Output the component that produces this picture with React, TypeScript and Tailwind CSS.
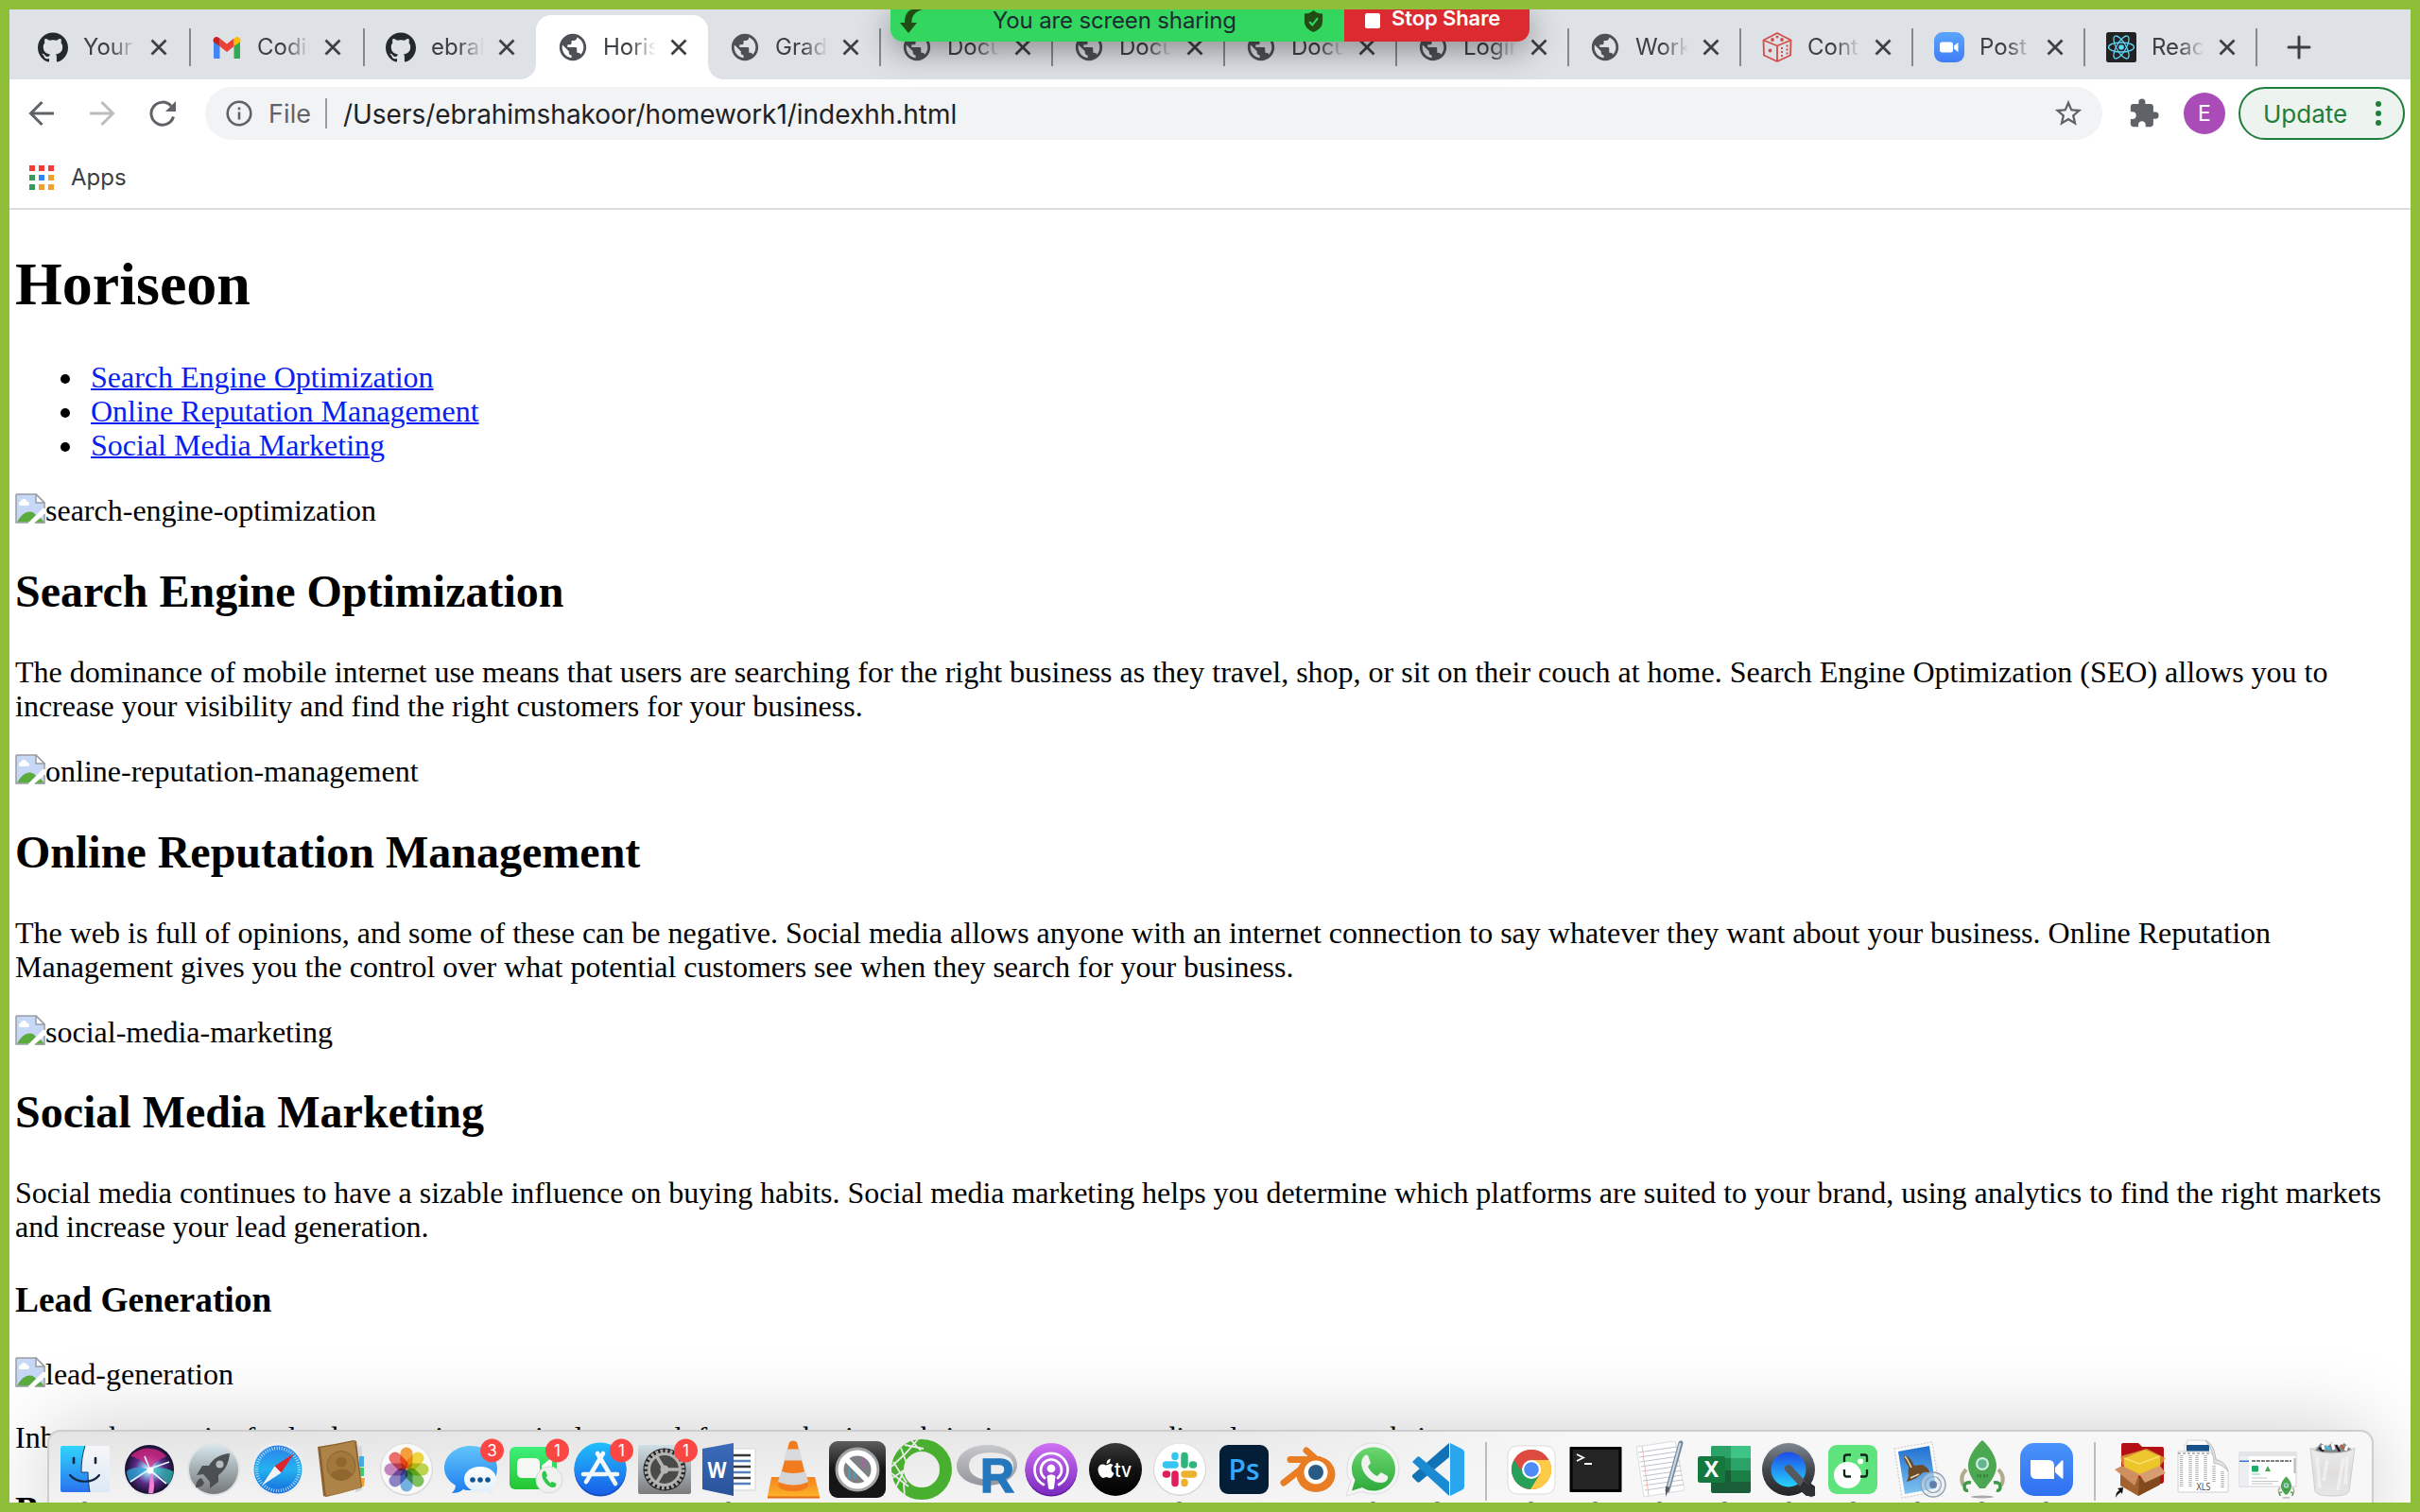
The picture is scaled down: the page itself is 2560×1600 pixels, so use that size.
import React from "react";
import { SiGithub } from "react-icons/si";
import { MdPublic, MdExtension, MdStarBorder } from "react-icons/md";

/* ---------- tab icons ---------- */

const Github = () => <SiGithub className="size-8 text-[#24292e]" />;

const Globe = () => <MdPublic className="size-[34px] shrink-0 -mx-px text-[#4d5156]" />;

const Gmail = () => (
  <svg viewBox="0 0 32 32" className="size-8">
    <path d="M2 27.5V8l6.5 5v15H4a2 2 0 0 1-2-.5z" fill="#4285f4" />
    <path d="M30 27.5V8l-6.5 5v15H28a2 2 0 0 0 2-.5z" fill="#34a853" />
    <path d="M8.500 6.500 16 12.500l7.500-6v8.500L16 21l-7.500-6z" fill="#ea4335" />
    <path d="M1.500 9c0-3.500 3.500-5 6-3l1 .6V15L1.500 10z" fill="#c5221f" />
    <path d="M30.500 9c0-3.500-3.500-5-6-3l-1 .6V15l7-5z" fill="#fbbc04" />
  </svg>
);

const Dice = () => (
  <svg viewBox="0 0 32 32" className="size-8" fill="none" stroke="#d14f48" strokeWidth="1.8" strokeLinejoin="round">
    <path d="M16 1 30.500 8.500 30 24.500 16 31 2 24.500 1.500 8.500z" />
    <path d="M1.500 8.500 16 14.500 30.500 8.500M16 14.500V31" />
    <g fill="#d14f48" stroke="none">
      <circle cx="16" cy="5" r="1.500" />
      <circle cx="11" cy="8" r="1.900" />
      <circle cx="21" cy="8" r="1.900" />
      <circle cx="8.500" cy="19.500" r="1.900" />
      <path d="M20 16h2v2h-2zM20 20h2v2h-2zM20 24h2v2h-2zM25.500 13.500h2v2h-2zM25.500 17.500h2v2h-2zM25.500 21.500h2v2h-2z" />
    </g>
  </svg>
);

const ZoomTab = () => (
  <svg viewBox="0 0 32 32" className="size-8">
    <defs>
      <linearGradient id="zt" x1="0" y1="0" x2="0" y2="1">
        <stop offset="0" stopColor="#5aa5fb" />
        <stop offset="1" stopColor="#3f7df6" />
      </linearGradient>
    </defs>
    <rect width="32" height="32" rx="9" fill="url(#zt)" />
    <rect x="6" y="10.500" width="14" height="11" rx="2.500" fill="#fff" />
    <path d="M21 14.500 25.500 11v10L21 17.500z" fill="#fff" />
  </svg>
);

const ReactTab = () => (
  <svg viewBox="0 0 32 32" className="size-8">
    <rect width="32" height="32" rx="2.500" fill="#222" />
    <g fill="none" stroke="#5fd6f5" strokeWidth="1.300">
      <ellipse cx="16" cy="16" rx="13.500" ry="5" />
      <ellipse cx="16" cy="16" rx="13.500" ry="5" transform="rotate(60 16 16)" />
      <ellipse cx="16" cy="16" rx="13.500" ry="5" transform="rotate(120 16 16)" />
    </g>
    <circle cx="16" cy="16" r="2.800" fill="#5fd6f5" />
  </svg>
);

const Cross = () => (
  <svg viewBox="0 0 18 18" className="size-[18px] shrink-0" stroke="#3c4043" strokeWidth="2.800">
    <path d="M1.500 1.500l15 15M16.500 1.500l-15 15" />
  </svg>
);

type TabProps = { icon: React.ReactNode; label: string; active?: boolean; size?: string; sep?: boolean };

const Tab = ({ icon, label, active, size = "w-[182px] pl-[23px]", sep = true }: TabProps) => (
  <div
    className={
      "relative flex shrink-0 items-center " +
      (active ? "mt-1.5 h-[68px] rounded-t-2xl bg-white pb-0 " : "h-[74px] pt-1.5 ") +
      size
    }
  >
    {active && (
      <>
        <span className="absolute bottom-0 -left-4 size-4 bg-[radial-gradient(circle_at_0_0,transparent_15.5px,white_16px)]" />
        <span className="absolute bottom-0 -right-4 size-4 bg-[radial-gradient(circle_at_100%_0,transparent_15.5px,white_16px)]" />
      </>
    )}
    <span className="flex size-8 shrink-0 items-center justify-center">{icon}</span>
    <span className="ml-4 w-[57px] shrink-0 overflow-hidden whitespace-nowrap text-[24px] leading-8 text-[#3c4043] [mask-image:linear-gradient(to_right,black_50%,transparent_98%)]">
      {label}
    </span>
    <span className="ml-3.5 flex">
      <Cross />
    </span>
    {sep && <span className="ml-auto -mr-px h-10 w-0.5 bg-[#85888d]" />}
  </div>
);

const TabStrip = () => (
  <div className="flex h-[74px] bg-[#dee1e6]">
    <Tab icon={<Github />} label="Your repos" size="w-[191px] pl-[30px]" />
    <Tab icon={<Gmail />} label="Coding" size="w-[184px] pl-[23px]" />
    <Tab icon={<Github />} label="ebrahim" size="w-[182px] pl-[23px]" sep={false} />
    <Tab icon={<Globe />} label="Horiseon" active sep={false} />
    <Tab icon={<Globe />} label="Gradebook" />
    <Tab icon={<Globe />} label="Document" />
    <Tab icon={<Globe />} label="Document" />
    <Tab icon={<Globe />} label="Document" />
    <Tab icon={<Globe />} label="Login" />
    <Tab icon={<Globe />} label="Work" />
    <Tab icon={<Dice />} label="Cont" />
    <Tab icon={<ZoomTab />} label="Post" />
    <Tab icon={<ReactTab />} label="React" />
    <svg viewBox="0 0 26 26" className="mt-[27px] ml-[32px] size-[26px]" stroke="#3c4043" strokeWidth="3" strokeLinecap="round">
      <path d="M13 2v22M2 13h22" />
    </svg>
  </div>
);

/* ---------- toolbar ---------- */

const Toolbar = () => (
  <div className="flex h-[72px] items-center pl-5 pr-1">
    <svg viewBox="0 0 28 28" className="size-7 shrink-0 fill-none stroke-[#5f6368] stroke-[3]">
      <path d="M27 14H3M14.500 2 2.500 14l12 12" />
    </svg>
    <svg viewBox="0 0 28 28" className="ml-9 size-7 shrink-0 fill-none stroke-[#babcbe] stroke-[3]">
      <path d="M1 14h24M13.500 2l12 12-12 12" />
    </svg>
    <svg viewBox="0 0 28 28" className="ml-9 size-7 shrink-0 fill-none stroke-[#5f6368] stroke-[3]">
      <path d="M25.500 17.500A12 12 0 1 1 23 6.200" />
      <path d="M28 1v11H17z" className="fill-[#5f6368] stroke-none" />
    </svg>
    <div className="ml-[31px] flex h-14 w-[2007px] shrink-0 items-center rounded-full bg-[#f1f3f4] pl-[22px] pr-[19px]">
      <svg viewBox="0 0 28 28" className="size-7 fill-none stroke-[#5f6368] stroke-[2.600]">
        <circle cx="14" cy="14" r="12.300" />
        <path d="M14 12.500v8M14 7.500v2.800" />
      </svg>
      <span className="ml-[17px] w-[47px] pt-px text-[27px] leading-9 tracking-[0.1px] text-[#5f6368]">File</span>
      <span className="ml-[13px] h-8 w-0.5 bg-[#9a9da1]" />
      <span className="ml-[17px] pt-px text-[28px] leading-9 tracking-[-0.03px] text-[#202124]">/Users/ebrahimshakoor/homework1/indexhh.html</span>
      <MdStarBorder className="ml-auto size-[34px] text-[#5f6368]" />
    </div>
    <MdExtension className="ml-[27px] size-[34px] shrink-0 text-[#5f6368]" />
    <span className="ml-[25px] flex size-11 shrink-0 items-center justify-center rounded-full bg-[#a94cb8] pt-px text-[23px] text-white">E</span>
    <div className="ml-[14px] flex h-14 w-44 shrink-0 items-center rounded-full border-2 border-[#1e7e3a] bg-[#edf3ee] pl-6">
      <span className="pt-px text-[26px] leading-9 text-[#1e7e3a]">Update</span>
      <span className="ml-auto mr-[23px] flex flex-col gap-[4px]">
        <i className="size-[6px] rounded-full bg-[#1e7e3a]" />
        <i className="size-[6px] rounded-full bg-[#1e7e3a]" />
        <i className="size-[6px] rounded-full bg-[#1e7e3a]" />
      </span>
    </div>
  </div>
);

const appColors = [
  "bg-[#f43a35]", "bg-[#f43a35]", "bg-[#f43a35]",
  "bg-[#37995b]", "bg-[#2b86f0]", "bg-[#eea22c]",
  "bg-[#37995b]", "bg-[#eea22c]", "bg-[#eea22c]",
];

const Bookmarks = () => (
  <div className="flex h-[66px] items-center border-b-2 border-[#dadce0] pb-1 pl-[21px]">
    <div className="mt-1 grid grid-cols-3 gap-1">
      {appColors.map((c, i) => (
        <span key={i} className={"size-1.5 " + c} />
      ))}
    </div>
    <span className="ml-[18px] mt-1 text-[24px] leading-8 text-[#3c4043]">Apps</span>
  </div>
);

/* ---------- screen sharing bar ---------- */

const ShareBar = () => (
  <div className="absolute top-0 left-[932px] flex h-[34px] w-[676px] rounded-b-[13px] shadow-[0_8px_34px_rgba(0,0,0,0.42)]">
    <div className="flex w-[480px] rounded-bl-[13px] bg-[#33d75f]">
      <svg viewBox="0 0 26 26" className="ml-[9px] size-[26px] fill-[#1f4d14]">
        <path d="M25 0C17 2 13 7 13.500 14H19L10 25 1 14h5C6 6 9 1 14 0z" />
      </svg>
      <span className="ml-[73px] w-[258px] whitespace-nowrap text-[24px] leading-[24px] tracking-[-0.15px] text-[#1d2b33]">You are screen sharing</span>
      <svg viewBox="0 0 22 24" className="ml-[70px] mt-px size-[23px]">
        <path d="M11 0c3 2.600 6 3.600 10 3.600V12c0 6-4 9.500-10 12C5 21.500 1 18 1 12V3.600c4 0 7-1 10-3.600z" fill="#1f4d14" />
        <path d="M6.500 12.500l3.200 3.500 6-7.500" fill="none" stroke="#33d75f" strokeWidth="2.200" />
      </svg>
    </div>
    <div className="flex w-[196px] rounded-br-[13px] bg-[#dc2b30]">
      <span className="mt-1 ml-[22px] size-4 rounded-[2px] bg-white" />
      <span className="ml-3 whitespace-nowrap text-[22px] leading-[18px] font-semibold tracking-[-0.1px] text-white">Stop Share</span>
    </div>
  </div>
);

/* ---------- page ---------- */

const BrokenImage = ({ alt }: { alt: string }) => (
  <div className="flex h-[37px] items-start">
    <svg viewBox="0 0 32 32" className="mt-px size-8 shrink-0">
      <path d="M1 1h21l9 9v21H1z" fill="#c6d8f6" />
      <path d="M4 12c-.500-3 2-3.500 2.500-4.500C8 5 12 5.500 12.500 8.500c3 .5 3 3.500 1.500 4.500H5z" fill="#fff" />
      <path d="M2 30.500C6 23 11 19 16 19.500c4 .500 7 3 10 11z" fill="#5bab3f" />
      <path d="M31.500 14 13 32h7L32 21z" fill="#fff" />
      <path d="M20.500 31.500 27 26l4.500 5.500z" fill="#5bab3f" />
      <path d="M1 1h21l9 9v6M31 22v9h-10M14 31H1V1" fill="none" stroke="#9a9da3" strokeWidth="1.500" />
      <path d="M22 1v9h9z" fill="#fff" stroke="#9a9da3" strokeWidth="1.500" />
    </svg>
    <span className="pt-px leading-9">{alt}</span>
  </div>
);

const H2 = ({ children }: { children: React.ReactNode }) => (
  <h2 className="my-10 text-[48px] leading-[55px] font-bold">{children}</h2>
);

const Page = () => (
  <main className="h-[1368px] overflow-hidden pl-1.5 pr-4 font-['Liberation_Serif',serif] text-[32px] leading-9 text-black">
    <h1 className="mt-[43px] mb-[45px] text-[64px] leading-[71px] font-bold">Horiseon</h1>
    <ul className="mb-8 pl-20 [&_a]:text-[#0a1ef0] [&_a]:underline [&_a]:decoration-2 [&_li]:before:mr-[22px] [&_li]:before:-ml-8 [&_li]:before:inline-block [&_li]:before:size-2.5 [&_li]:before:rounded-full [&_li]:before:bg-black [&_li]:before:align-[4px] [&_li]:before:content-['']">
      <li><a>Search Engine Optimization</a></li>
      <li><a>Online Reputation Management</a></li>
      <li><a>Social Media Marketing</a></li>
    </ul>
    <BrokenImage alt="search-engine-optimization" />
    <H2>Search Engine Optimization</H2>
    <p className="mb-8">
      The dominance of mobile internet use means that users are searching for the right business as they travel, shop, or sit on their couch at home. Search Engine Optimization (SEO) allows you to
      <br />
      increase your visibility and find the right customers for your business.
    </p>
    <BrokenImage alt="online-reputation-management" />
    <H2>Online Reputation Management</H2>
    <p className="mb-8">
      The web is full of opinions, and some of these can be negative. Social media allows anyone with an internet connection to say whatever they want about your business. Online Reputation
      <br />
      Management gives you the control over what potential customers see when they search for your business.
    </p>
    <BrokenImage alt="social-media-marketing" />
    <div className="-mt-px">
      <H2>Social Media Marketing</H2>
    </div>
    <p className="[word-spacing:-0.1px]">
      Social media continues to have a sizable influence on buying habits. Social media marketing helps you determine which platforms are suited to your brand, using analytics to find the right markets
      <br />
      and increase your lead generation.
    </p>
    <h3 className="mt-[38px] mb-[38px] text-[37.44px] leading-[43px] font-bold">Lead Generation</h3>
    <BrokenImage alt="lead-generation" />
    <p className="mt-[31px]">Inbound strategies for lead generation require less work for your business, bringing customers directly to your website.</p>
    <h3 className="mt-[37px] text-[37.44px] leading-[43px] font-bold">Brand Awareness</h3>
  </main>
);

/* ---------- dock icons, each on a 64 by 64 grid ---------- */

const Grad = ({ id, a, b, m }: { id: string; a: string; b: string; m?: string }) => (
  <linearGradient id={id} x1="0" y1="0" x2="0" y2="1">
    <stop offset="0" stopColor={a} />
    {m && <stop offset="0.5" stopColor={m} />}
    <stop offset="1" stopColor={b} />
  </linearGradient>
);

const Finder = () => (
  <>
    <Grad id="fi" a="#2fd5fb" b="#2a72ee" />
    <Grad id="fj" a="#f7f7f9" b="#dce9f6" />
    <rect x="6" y="7" width="52" height="49" rx="2" fill="url(#fj)" />
    <path d="M8 7h24c-3 9-4 18-4 28h7c0 8 1 15 2 21H8a2 2 0 0 1-2-2V9a2 2 0 0 1 2-2z" fill="url(#fi)" />
    <path d="M32 7c-3 9-4 18-4 28h7c0 8 1 15 2 21" fill="none" stroke="#1b3c68" strokeWidth="1" />
    <path d="M20 20v5M43 20v5" stroke="#12263f" strokeWidth="2.600" strokeLinecap="round" />
    <path d="M16 38c8 9 24 9 31 0" fill="none" stroke="#12263f" strokeWidth="2.200" strokeLinecap="round" />
  </>
);

const Siri = () => (
  <>
    <radialGradient id="si">
      <stop offset="0" stopColor="#fff" /><stop offset=".25" stopColor="#8fb9e8" /><stop offset=".6" stopColor="#5a2a86" /><stop offset="1" stopColor="#150f2c" />
    </radialGradient>
    <circle cx="32" cy="32" r="28" fill="#e9e9ee" />
    <circle cx="32" cy="32" r="26" fill="url(#si)" />
    <path d="M12 18C22 6 42 8 50 18 42 22 36 24 33 33 28 24 20 20 12 18z" fill="#d8257f" opacity=".75" />
    <path d="M8 34c8-6 16-5 25-1-8 2-15 8-21 13-2-3-4-8-4-12z" fill="#2ba8d8" opacity=".75" />
    <path d="M33 33c9-5 18-2 24 1 0 6-2 10-5 14-5-6-11-12-19-15z" fill="#2bc7b8" opacity=".7" />
    <path d="M33 33c4 8 5 16 3 24l-5 .500C32 48 33 40 33 33z" fill="#f27fd0" />
    <path d="M12 45 33 31l20-7M33 33 27 18M33 33l17 14" stroke="#d9fbff" strokeWidth="1.700" fill="none" />
    <circle cx="33" cy="33" r="3.500" fill="#fff" />
  </>
);

const Launchpad = () => (
  <>
    <Grad id="la" a="#d6e6ec" b="#757778" m="#a3adb1" />
    <circle cx="32" cy="32" r="28" fill="#dfe2e4" />
    <circle cx="32" cy="32" r="26" fill="url(#la)" />
    <path d="M49 15c-11 1-18 6-22 13h-7l-6 10 7-1 7 8 0 7 9-7v-7c7-5 11-12 12-23z" fill="#4c4f52" />
    <circle cx="38.500" cy="26.500" r="4" fill="#b3bcc0" />
    <path d="M19 41c-4 1-6 6-6 10 4 0 8-1 9-5z" fill="#4c4f52" />
  </>
);

const Safari = () => (
  <>
    <Grad id="sa" a="#2c7fe8" b="#1568dc" m="#24b2f0" />
    <circle cx="32" cy="32" r="28" fill="#eceef1" />
    <circle cx="32" cy="32" r="25.500" fill="url(#sa)" />
    <circle cx="32" cy="32" r="22.500" fill="none" stroke="#bfe4fb" strokeWidth="3.500" strokeDasharray="0.9 1.7" />
    <path d="M49 15 28.500 28.500 35.500 35.500z" fill="#e0242b" />
    <path d="M15 49 28.500 28.500 35.500 35.500z" fill="#f1f3f5" />
  </>
);

const Contacts = () => (
  <>
    <path d="M46 6l7 2v46l-7 2z" fill="#d7d7d7" />
    <path d="M50 18h5v11h-5z" fill="#48a8e0" /><path d="M50 30h5v9h-5z" fill="#43c86b" /><path d="M50 41h6l-1 9h-5z" fill="#f2a02e" />
    <path d="M6 8Q26 5 44 1l3 1 6 49q-20 6-38 10l-3-1z" fill="#8b6231" />
    <path d="M9 9Q28 6 45 2l7 49Q32 57 15 60z" fill="#ad8347" />
    <ellipse cx="31" cy="28" rx="15" ry="15.500" fill="#a3783c" stroke="#8b652f" />
    <circle cx="31" cy="24" r="5.500" fill="#8f682f" />
    <path d="M20 38c3-8 18-9 22-1-5 8-17 8-22 1z" fill="#8f682f" />
  </>
);

const petals = ["#f7941e", "#f1d421", "#b5d334", "#6cbb45", "#61a8dd", "#7c72c0", "#c077b7", "#ef5a55"];
const Photos = () => (
  <>
    <circle cx="32" cy="32" r="28" fill="#d7d9dc" />
    <circle cx="32" cy="31.500" r="26.800" fill="#f9f9fa" />
    {petals.map((c, i) => (
      <rect key={c} x="25.500" y="8.500" width="13" height="23" rx="6.500" fill={c} opacity=".86" transform={`rotate(${i * 45} 32 32)`} className="mix-blend-multiply" />
    ))}
  </>
);

const Badge = ({ n }: { n: string }) => (
  <>
    <circle cx="54.500" cy="12" r="12.500" fill="#fb4743" />
    <text x="54.500" y="18" textAnchor="middle" fontSize="17" fill="#fff" fontFamily="Inter, sans-serif">{n}</text>
  </>
);

const Messages = () => (
  <>
    <Grad id="me" a="#62c4fb" b="#1d7df0" />
    <Grad id="mf" a="#fff" b="#dfeefb" />
    <path d="M32 7c16 0 28 10 28 24S48 54 32 54c-3 0-6 0-8-1-3 3-8 4-12 4 2-2 4-5 4-8C9 45 4 38 4 31 4 17 16 7 32 7z" fill="url(#me)" />
    <path d="M42 29c10 0 17 6 17 13 0 4-2 8-5 10 0 2 1 4 2 6-3 0-6-1-8-3l-6 .700c-10 0-17-6-17-13.500S32 29 42 29z" fill="url(#mf)" />
    <circle cx="34" cy="43" r="2.800" fill="#14548f" /><circle cx="42" cy="43" r="2.800" fill="#14548f" /><circle cx="50" cy="43" r="2.800" fill="#14548f" />
    <Badge n="3" />
  </>
);

const FaceTime = () => (
  <>
    <Grad id="fa" a="#3df07a" b="#25c532" />
    <rect x="4" y="8" width="50" height="45" rx="6" fill="url(#fa)" />
    <rect x="12" y="20" width="24" height="21" rx="5" fill="#f4f7f4" />
    <path d="M38 28l11-9v14l-11 4z" fill="#f4f7f4" />
    <circle cx="46" cy="43" r="14" fill="#eef1ee" stroke="#d5dad5" />
    <path d="M39 35c-3 5 5 17 12 16 3-1 3-4 1-5l-3-1-2 1.500-4.500-6 1.500-2-1.500-4c-1-1.500-2.500-1-3.500.500z" fill="#2cc94a" />
    <Badge n="1" />
  </>
);

const AppStore = () => (
  <>
    <Grad id="as" a="#20bffb" b="#1a5ee8" />
    <circle cx="32" cy="33" r="27.500" fill="#1550c4" />
    <circle cx="32" cy="31" r="27.500" fill="url(#as)" />
    <g stroke="#f3f8fd" strokeWidth="4.600" strokeLinecap="round">
      <path d="M35 15 20 40M29 15l19 32M14 37h24M45 37h5M17 45l2-3" />
    </g>
    <Badge n="1" />
  </>
);

const Prefs = () => (
  <>
    <Grad id="pr" a="#cfdfe6" b="#7b7c7c" />
    <rect x="4" y="6" width="56" height="52" rx="2" fill="url(#pr)" />
    <circle cx="32" cy="32" r="22.500" fill="#202122" />
    <circle cx="32" cy="32" r="19.500" fill="none" stroke="#a8a8a6" strokeWidth="4" strokeDasharray="3 2.100" />
    <circle cx="32" cy="32" r="16.500" fill="#4a4a49" stroke="#b5b4b1" strokeWidth="3" />
    <path d="M32 32h17M32 32 23 17M32 32 23 47" stroke="#b5b4b1" strokeWidth="3.500" />
    <circle cx="32" cy="32" r="4.500" fill="#b5b4b1" />
    <Badge n="1" />
  </>
);

const Word = () => (
  <>
    <Grad id="wo" a="#3a6cba" b="#2a5298" />
    <rect x="30" y="10" width="30" height="44" rx="1" fill="#fff" stroke="#d0d3d8" />
    <path d="M36 17h19M36 29h19M36 41h19" stroke="#37373a" strokeWidth="2.400" />
    <path d="M36 23h19M36 35h19M36 47h19" stroke="#5580bd" strokeWidth="2.400" />
    <path d="M4 10 37 4v56L4 53z" fill="url(#wo)" />
    <text x="19.500" y="41" textAnchor="middle" fontSize="24" fontWeight="700" fill="#fff" fontFamily="Open Sans, sans-serif" textLength="20" lengthAdjust="spacingAndGlyphs">W</text>
  </>
);

const Vlc = () => (
  <>
    <Grad id="vl" a="#f58220" b="#fdb62b" />
    <path d="M9 40h46l5 20v2H5v-2z" fill="url(#vl)" />
    <path d="M5 60.500h55v2H5z" fill="#e46a12" />
    <path d="M28 3q4-3 8 0l12 46c-3 8-29 8-32 0z" fill="#f27b1d" />
    <path d="M25.500 10.500h13.200l3.200 12H22.200z" fill="#d9dadb" />
    <path d="M19.500 34q12.500 4 25.500 0l3 11q-15 7-32 0z" fill="#d3d5d7" />
  </>
);

const Blocked = () => (
  <>
    <Grad id="bl" a="#5e5e5e" b="#161616" m="#151515" />
    <rect x="2" y="2" width="60" height="60" rx="9" fill="url(#bl)" />
    <circle cx="32" cy="32" r="23.500" fill="#a2a3a5" />
    <circle cx="32" cy="32" r="17.500" fill="#7c8084" stroke="#fff" strokeWidth="6" />
    <path d="M22 30h3v12h-3zM28 34h3v8h-3z" fill="#4a9bb5" /><path d="M36 20h4v10h-4z" fill="#9d6a9c" />
    <path d="M19 20l26 26" stroke="#fff" strokeWidth="6" />
  </>
);

const Anaconda = () => (
  <>
    <circle cx="32" cy="32" r="25.500" fill="none" stroke="#49b02f" strokeWidth="13" />
    <g stroke="#eaeaea" strokeWidth="1.800" fill="none">
      <path d="M0 29l15-14 13-15M1 41l15-10M2 24l14 22M10 9l7 19M14 6l20 4M5 50l10-20M0 36l18 14M20 0l11 12M13 46l1 16" />
    </g>
  </>
);

const RLang = () => (
  <>
    <Grad id="rg" a="#c7c8cb" b="#93969c" />
    <path fillRule="evenodd" d="M32 6c17 0 32 8 32 21S49 49 32 49 0 41 0 28 15 6 32 6zm4 8C22 14 13 19 13 28s9 15 23 15 24-6 24-15-10-14-24-14z" fill="url(#rg)" />
    <text x="25" y="56" fontSize="50" fontWeight="700" fill="#2577bd" stroke="#2577bd" strokeWidth="1.500" fontFamily="Liberation Sans, sans-serif" textLength="36" lengthAdjust="spacingAndGlyphs">R</text>
  </>
);

const Podcasts = () => (
  <>
    <Grad id="po" a="#d071f4" b="#7a2abf" />
    <circle cx="32" cy="33" r="27.500" fill="#5d189c" />
    <circle cx="32" cy="31.500" r="27.500" fill="url(#po)" />
    <g fill="none" stroke="#fff" strokeWidth="2.700" strokeLinecap="round">
      <path d="M24 48a17.500 17.500 0 1 1 16 0" />
      <path d="M25 41a11 11 0 1 1 14 0" />
    </g>
    <circle cx="32" cy="31" r="4.300" fill="#fff" />
    <path d="M27.500 39q4.500-3.500 9 0L35 52q-3 2.500-6 0z" fill="#fff" />
  </>
);

const AppleTv = () => (
  <>
    <Grad id="at" a="#383838" b="#000" m="#121212" />
    <circle cx="32" cy="32" r="28" fill="url(#at)" />
    <path d="M24 27c2-1.500 4-1 5.500.500-3 2.300-2.500 7 1 8.500-1 3-3 5-4.500 5-1.500 0-2-1-3.500-1s-2 1-3.500 1c-3 0-8-9-4-13 2-2 4.500-2 6.500-.500z M22.500 26c0-3 2-5 4-5.500.500 3-1.500 5.500-4 5.500z" fill="#fff" />
    <text x="31" y="40" fontSize="22" fontWeight="500" fill="#fff" fontFamily="Inter, sans-serif" textLength="18" lengthAdjust="spacingAndGlyphs">tv</text>
  </>
);

const Slack = () => (
  <>
    <circle cx="32" cy="32" r="28" fill="#d6d6d9" />
    <circle cx="32" cy="31.500" r="27" fill="#fff" />
    <g strokeWidth="7.500" strokeLinecap="round">
      <path d="M17.500 27H27M27 17.500v1" stroke="#36c5f0" />
      <path d="M37 17.500V27M46.500 27h-1" stroke="#2eb67d" />
      <path d="M46.500 37H37M37 46.500v-1" stroke="#ecb22e" />
      <path d="M27 46.500V37M17.500 37h1" stroke="#e01e5a" />
    </g>
  </>
);

const Photoshop = () => (
  <>
    <rect x="6" y="6" width="52" height="52" rx="9" fill="#031e36" />
    <text x="32" y="42.500" textAnchor="middle" fontSize="31" fontWeight="600" fill="#35a8ff" fontFamily="Open Sans, sans-serif" textLength="33" lengthAdjust="spacingAndGlyphs">Ps</text>
  </>
);

const Blender = () => (
  <>
    <g fill="none" stroke="#e97d23" strokeWidth="7" strokeLinecap="round" strokeLinejoin="round">
      <path d="M13 21.500h30M30 12l17 15M6 46 34 24" />
    </g>
    <ellipse cx="40" cy="37" rx="20.500" ry="19" fill="#e97d23" />
    <circle cx="40" cy="35" r="12.500" fill="#fff" />
    <circle cx="40" cy="35" r="8" fill="#285a86" />
  </>
);

const WhatsApp = () => (
  <>
    <Grad id="wa" a="#6bd66f" b="#2dab3b" />
    <path d="M33 4c16 0 27 12 27 27S49 58 33 58c-4 0-8-1-12-3L4 60l5-16C5 40 5 36 5 31 5 16 17 4 33 4z" fill="#f4f5f5" stroke="#dcdddd" />
    <path d="M33 8.500c13 0 23 10 23 23s-10 23-23 23c-4.500 0-8.500-1-12-3.500L10 54.500 13.500 43C11 39.500 10 35.500 10 31.500c0-13 10-23 23-23z" fill="url(#wa)" />
    <path d="M23 18c-8 8 2 28 18 28 5 0 8-3 7-7l-7-4-4 4c-5-2-8-6-10-10l3-4-3-8c-1-1-3-.500-4 1z" fill="#f1f3f1" />
  </>
);

const VsCode = () => (
  <>
    <path d="M5 40l5 5c1 1 2 1 3 0l31-26V4L5 38z" fill="#1173b6" />
    <path d="M5 24l5-5c1-1 2-1 3 0l31 26v15z" fill="#1a8bd3" />
    <path d="M45 4l12 6c2 1 3 2 3 4v36c0 2-1 3-3 4l-12 6z" fill="#2aa6ee" />
  </>
);

const Chrome = () => (
  <>
    <rect x="7" y="7" width="50" height="51" rx="10" fill="#fff" stroke="#dcdcdc" />
    <circle cx="32" cy="32" r="21" fill="#e8453c" />
    <path d="M32 32 13.800 21.500A21 21 0 0 0 32 53l8-15z" fill="#27a05a" />
    <path d="M32 22h18.500A21 21 0 0 1 31 53l10-16z" fill="#fdcb45" />
    <path d="M13.800 21.500A21 21 0 0 1 50.500 22H32L20 32z" fill="#dd4a3f" />
    <circle cx="32" cy="32" r="10" fill="#fff" />
    <circle cx="32" cy="32" r="7.800" fill="#4d8bf5" />
  </>
);

const Terminal = () => (
  <>
    <rect x="4.500" y="8" width="55" height="48" rx="1" fill="#000" />
    <rect x="7.500" y="11" width="49" height="42" fill="#242424" />
    <path d="M12 16l7 3.500-7 3.500M20 26h8" fill="none" stroke="#fff" strokeWidth="1.800" />
  </>
);

const TextEdit = () => (
  <>
    <path d="M7 8 48 2l10 52-43 7z" fill="#fff" stroke="#dcdcdc" />
    <g stroke="#bcc3cd" strokeWidth="1">
      <path d="M9 14l41-6M10 19l41-6M11 24l41-6M12 29l41-6M13 34l41-6M14 39l41-6M14 44l41-6M15 49l41-6M16 54l41-6" />
    </g>
    <path d="M13 7l7 53" stroke="#efb9b9" />
    <path d="M54 4 40 54" stroke="#7f8b97" strokeWidth="5" strokeLinecap="round" />
    <path d="M53.500 4 41 50" stroke="#c6dcee" strokeWidth="2" />
    <path d="M38 50l4 1-4 10z" fill="#54575c" />
  </>
);

const Excel = () => (
  <>
    <rect x="18" y="7" width="42" height="50" rx="2" fill="#1a7f44" />
    <path d="M20 7h19v13H18V9z" fill="#2ba267" /><path d="M39 7h19l2 2v11H39z" fill="#3dc588" />
    <path d="M39 20h21v13H39z" fill="#2ba267" /><path d="M18 33h21v12H18z" fill="#185c37" /><path d="M18 45h42v10l-2 2H20l-2-2z" fill="#1b5e3a" />
    <rect x="4" y="18" width="29" height="28" rx="2.500" fill="#15783f" />
    <text x="18.500" y="40" textAnchor="middle" fontSize="23" fontWeight="700" fill="#fff" fontFamily="Open Sans, sans-serif">X</text>
  </>
);

const QuickTime = () => (
  <>
    <Grad id="qa" a="#7e8791" b="#222325" m="#45494e" />
    <Grad id="qb" a="#1e4be8" b="#27d3fc" />
    <path d="M44 38l16 12v10h-9L34 46z" fill="#2b2c2f" />
    <circle cx="32" cy="32" r="28" fill="url(#qa)" />
    <circle cx="32" cy="32" r="18.500" fill="url(#qb)" />
    <path d="M32 31 56 57" stroke="#56595e" strokeWidth="8" strokeLinecap="round" />
    <path d="M48 44l12 10v6h-9l-8-8z" fill="#2f3033" />
  </>
);

const Capture = () => (
  <>
    <rect x="6" y="6" width="52" height="52" rx="9" fill="#5fe37c" />
    <ellipse cx="26.500" cy="38" rx="14.500" ry="14" fill="#fff" /><circle cx="40" cy="23.500" r="3" fill="#fff" />
    <path d="M23 24v-5q0-2.500 2.500-2.500H30M40 16.500h4.500q2.500 0 2.500 2.500v5M47 32v5q0 2.500-2.500 2.500H40M30 39.500h-4.500Q23 39.500 23 37v-5" fill="none" stroke="#10251a" strokeWidth="2.300" />
  </>
);

const Mail = () => (
  <>
    <Grad id="ma" a="#1f6fd0" b="#7fc4f2" />
    <path d="M7 10 47 3l8 52-40 7z" fill="#fbfbfb" stroke="#d4d4d4" strokeWidth="1.500" strokeDasharray="2 1.500" />
    <path d="M11 13 44 7l7 45-33 6z" fill="url(#ma)" />
    <path d="M17 17c6 1 8 5 11 11l8-1c4 1 8 5 8 8-3 0-5-1-8 1-4 5-9 7-16 9l2-6c-1-4 0-8 0-10-3-4-5-8-5-12z" fill="#6b4b2a" />
    <path d="M18 18c3 3 5 8 7 12M24 41l9-4" stroke="#e6d7bf" strokeWidth="1.600" fill="none" />
    <circle cx="48" cy="48" r="13" fill="#dfe6ee" fillOpacity=".45" stroke="#8fa0b3" strokeWidth="1.400" />
    <circle cx="48" cy="48" r="8.500" fill="none" stroke="#8fa0b3" strokeWidth="1.200" />
    <circle cx="48" cy="48" r="4" fill="#5f7fa8" />
  </>
);

const RobotShape = () => (
  <>
    <path d="M15 32c-5 5-6 11-3 17M49 32c5 5 6 11 3 17" stroke="#b1a98c" strokeWidth="4" fill="none" />
    <path d="M20 46q-7-1-7 4t4 4M44 46q7-1 7 4t-4 4" stroke="#3d9b48" strokeWidth="3.500" fill="none" />
    <path d="M32 1c8 7 15 18 15 27 0 11-8 18-12 24h-6c-4-6-12-13-12-24 0-9 7-20 15-27z" fill="#4ba750" />
    <circle cx="32" cy="26" r="7" fill="#cfeee0" /><circle cx="32" cy="26" r="4.800" fill="#63b58e" />
    <path d="M27 37v3M30 37v4M34 37v4M37 37v3" stroke="#2f7d36" strokeWidth="1.500" />
    <ellipse cx="32" cy="61" rx="12" ry="1.500" fill="#a9a9a9" />
  </>
);

const ZoomApp = () => (
  <>
    <Grad id="za" a="#4a93fb" b="#2f70f0" />
    <rect x="4" y="4" width="56" height="56" rx="15" fill="url(#za)" />
    <path d="M15 22h19q6 0 6 6v14H21q-6 0-6-6z" fill="#fff" />
    <path d="M41 30l7-7.500h1.500v19H48L41 35z" fill="#fff" />
  </>
);

const Box = () => (
  <>
    <path d="M13 6q0-2 2-2h16l4 4h21q2 0 2 2v34q0 3-3 3H16q-3 0-3-3z" fill="#b40f14" />
    <path d="M12 32l20 9 22-7v14L31 60 12 49z" fill="#a2622f" />
    <path d="M32 41l22-8v15L31 60z" fill="#82491f" />
    <path d="M14 27l-2-9L40 10 60 20l-8 11-20 8z" fill="#dba23d" opacity=".8" />
    <path d="M16 20 38 11l16 7v12L32 38 16 30z" fill="#edc52c" />
    <path d="M16 20l16 6 22-8" fill="none" stroke="#f9e16a" strokeWidth="1.500" />
    <path d="M14 28l18 9-5 12L6 32z" fill="#cf9061" /><path d="M32 37l22-9 6 8-22 10z" fill="#d79c70" />
    <path d="M7 62q0-6 4-8l-2-2 6-1-1 7-1.500-2Q9 58 7 62z" fill="#111" />
  </>
);

const Xls = () => (
  <>
    <path d="M12 5h2l1-4h18l10 12v10H12z" fill="#fafafa" stroke="#d5d5d5" />
    <path d="M14 6h24v7H14z" fill="#175089" />
    <path d="M5 13h33l20 20v23H5z" fill="#fff" stroke="#cfcfcf" />
    <g stroke="#b4b4b4" strokeWidth="3.500" strokeDasharray="1 1">
      <path d="M8.500 17v34M18 17v34M25 17v34M34 17v28M43 28v17M52 34v17" />
    </g>
    <path d="M5 15h34" stroke="#777" strokeDasharray="3 2" />
    <path d="M34 1c8 4 10 12 11 21 6 0 11 5 13 12C52 27 46 25 43 26 43 17 40 8 34 1z" fill="#e3e3e3" stroke="#b9b9b9" />
    <path d="M23 45h19v8H23z" fill="#fff" />
    <text x="32" y="53.500" textAnchor="middle" fontSize="10" fill="#444" fontFamily="Open Sans, sans-serif" textLength="15" lengthAdjust="spacingAndGlyphs">XLS</text>
  </>
);

const WindowThumb = () => (
  <>
    <rect x="2" y="14" width="60" height="36" fill="#fff" stroke="#cdd0d3" />
    <path d="M2 14h60v4H2z" fill="#e3e4e6" /><path d="M2 18h10v31H2z" fill="#eceef2" /><path d="M2 22.500h10v1.500H2z" fill="#3573d4" />
    <path d="M15 23h42" stroke="#555" strokeWidth="1.700" strokeDasharray="4 1" />
    <rect x="15" y="28" width="7" height="6.500" rx="1" fill="#1cab69" /><path d="M32 28l3 6h-6z" fill="#4ba750" />
    <path d="M15 37h9" stroke="#7fd3a8" /><path d="M15 41h16M15 44.500h28M15 47h22" stroke="#c4c4c4" />
    <path d="M60.500 20v16" stroke="#b9b9b9" strokeWidth="2" />
    <svg x="39.500" y="39" width="24" height="24" viewBox="0 0 64 64"><RobotShape /></svg>
  </>
);

const Trash = () => (
  <>
    <Grad id="tr" a="#ececec" b="#e6e6e6" m="#e0dfde" />
    <path d="M10 10Q32 1 54 10v6H10z" fill="#d6d8da" />
    <path d="M14 12l6-8 7 4 5-5 6 6 7-5 7 7-5 4-10-1-8 1-9-1z" fill="#85888c" />
    <path d="M18 9l5 4M36 6l4 7" stroke="#1d1d1f" strokeWidth="2.500" /><path d="M25 8l5 3" stroke="#3ec0dd" strokeWidth="3" /><path d="M41 6l5 6" stroke="#b85a32" strokeWidth="2" /><path d="M32 4l2 7M48 7l-2 5M22 6l1 5" stroke="#fff" strokeWidth="3" />
    <path d="M9 9q4 5 23 6 20-1 24-6L50 55q-2 5-18 5t-18-5z" fill="url(#tr)" stroke="#cccdcf" />
    <path d="M16 18l3 34M27 22l-4 22M44 20l-6 34M48 18l-2 30" stroke="#f5f5f5" strokeWidth="3.500" opacity=".7" />
  </>
);

type DockItem = { el: React.ReactNode; dot?: boolean };

const left: DockItem[] = [
  { el: <Finder />, dot: true }, { el: <Siri /> }, { el: <Launchpad /> }, { el: <Safari /> }, { el: <Contacts /> }, { el: <Photos /> },
  { el: <Messages /> }, { el: <FaceTime /> }, { el: <AppStore /> }, { el: <Prefs /> }, { el: <Word />, dot: true }, { el: <Vlc /> },
  { el: <Blocked /> }, { el: <Anaconda /> }, { el: <RLang /> }, { el: <Podcasts /> }, { el: <AppleTv /> }, { el: <Slack />, dot: true },
  { el: <Photoshop /> }, { el: <Blender /> }, { el: <WhatsApp />, dot: true }, { el: <VsCode />, dot: true },
];
const middle: DockItem[] = [
  { el: <Chrome />, dot: true }, { el: <Terminal />, dot: true }, { el: <TextEdit />, dot: true }, { el: <Excel />, dot: true },
  { el: <QuickTime />, dot: true }, { el: <Capture />, dot: true }, { el: <Mail />, dot: true }, { el: <RobotShape />, dot: true }, { el: <ZoomApp />, dot: true },
];
const right: DockItem[] = [{ el: <Box /> }, { el: <Xls /> }, { el: <WindowThumb /> }, { el: <Trash /> }];

const Group = ({ items }: { items: DockItem[] }) => (
  <div className="flex">
    {items.map(({ el, dot }, i) => (
      <div key={i} className="flex w-[68.15px] flex-col items-center">
        <svg viewBox="0 0 64 64" className="isolate mt-2 size-16 overflow-visible">{el}</svg>
        {dot && <span className="mt-[1.500px] size-[9px] rounded-full bg-[#6b6b6b]" />}
      </div>
    ))}
  </div>
);

const Dock = () => (
  <div className="absolute top-[1503px] left-[40px] flex h-[110px] w-[2461px] rounded-[14px] border-2 border-[#cdcdcd] bg-[linear-gradient(90deg,#e4e4e4_0%,#e8e8e8_50%,#f7f7f7_66%,#f7f7f7_100%)] pl-[3.5px] shadow-[0_0_90px_rgba(0,0,0,0.20)]">
    <div className="absolute inset-0 bg-[linear-gradient(180deg,transparent_0%,rgba(247,247,247,0.8)_70%)]" />
    <div className="relative flex">
      <Group items={left} />
      <span className="mr-[13px] ml-[16px] mt-[11px] h-[62px] w-0.5 bg-[#bdbdbd]" />
      <Group items={middle} />
      <span className="mr-[12px] ml-[16px] mt-[11px] h-[62px] w-0.5 bg-[#bdbdbd]" />
      <Group items={right} />
    </div>
  </div>
);

export default function App() {
  return (
    <div className="relative h-[1600px] w-[2560px] overflow-hidden border-[10px] border-[#8fbe38] bg-white font-[Inter,Roboto,sans-serif]">
      <TabStrip />
      <Toolbar />
      <Bookmarks />
      <Page />
      <ShareBar />
      <Dock />
    </div>
  );
}
